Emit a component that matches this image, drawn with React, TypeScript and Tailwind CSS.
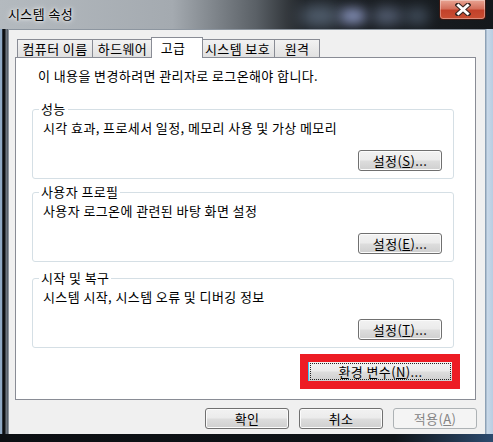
import React from 'react';

const face =
  'border border-[#707070] rounded-[3px] bg-[linear-gradient(#f2f2f2_0%,#ebebeb_48%,#dddddd_52%,#cfcfcf_100%)] shadow-[inset_0_0_0_1px_#fbfbfb] flex items-center justify-center text-[13px] leading-none text-black';

function Label({ label, mnemonic, after }: { label: string; mnemonic?: string; after?: string }) {
  return (
    <span>
      {label}
      {mnemonic ? (
        <>
          (<span className="underline">{mnemonic}</span>)
        </>
      ) : null}
      {after}
    </span>
  );
}

function Btn({ label, mnemonic, after = '', disabled = false }: { label: string; mnemonic?: string; after?: string; disabled?: boolean }) {
  if (disabled) {
    return (
      <div className="w-[84px] h-[21px] border border-[#adb2b5] rounded-[3px] bg-[#f4f4f4] flex items-center justify-center text-[13px] leading-none text-[#838383]">
        <Label label={label} mnemonic={mnemonic} after={after} />
      </div>
    );
  }
  return (
    <div className={`w-[84px] h-[21px] ${face}`}>
      <Label label={label} mnemonic={mnemonic} after={after} />
    </div>
  );
}

function Group({ title, desc, mnemonic, className = '' }: { title: string; desc: string; mnemonic: string; className?: string }) {
  return (
    <fieldset className={`w-[422px] border border-[#d5dfe5] rounded-[3px] pl-[6px] pr-[11px] pb-[7px] ${className}`}>
      <legend className="px-[2px] text-[13px] leading-[14px]">{title}</legend>
      <div className="pl-[4px] mt-[4px] text-[13px] leading-[16px]">{desc}</div>
      <div className="flex justify-end mt-[14px]">
        <Btn label="설정" mnemonic={mnemonic} after="..." />
      </div>
    </fieldset>
  );
}

function Tab({ label, w }: { label: string; w: string }) {
  return (
    <div className={`${w} h-[18px] -ml-px first:ml-0 border border-b-0 border-[#898c95] bg-[linear-gradient(#f2f2f2,#e1e1e1)] flex items-center justify-center text-[13px] leading-none`}>
      {label}
    </div>
  );
}

export default function App() {
  return (
    <div className="w-[493px] h-[442px] flex flex-col overflow-hidden bg-[linear-gradient(90deg,#0c0f13_0%,#0f1418_80%,#2c4a6e_100%)] font-['Noto_Sans_CJK_KR','Noto_Sans',sans-serif] tracking-[0.4px] text-black">
      {/* title bar */}
      <div className="relative h-[29px] flex items-start bg-[linear-gradient(90deg,#b4babf_0%,#a4aab0_35%,#5a6066_52%,#1c2024_62%,#14181c_100%)] overflow-hidden">
        <div className="absolute left-[300px] top-[6px] w-[40px] h-[20px] rounded-full bg-[#6d7f95] blur-[8px] opacity-70" />
        <div className="absolute left-[340px] top-[8px] w-[26px] h-[16px] rounded-full bg-[#9aa7d6] blur-[6px] opacity-80" />
        <div className="absolute left-[372px] top-[8px] w-[30px] h-[16px] rounded-full bg-[#8090b0] blur-[7px] opacity-60" />
        <div className="absolute left-[405px] top-[8px] w-[24px] h-[16px] rounded-full bg-[#7186a0] blur-[7px] opacity-50" />
        <div className="relative pl-[8px] pt-[7px] text-[13px] leading-[14px] text-black [text-shadow:0_0_6px_#ffffff,0_0_3px_#ffffff]">
          시스템 속성
        </div>
        <div className="relative ml-auto mr-[7px] w-[47px] h-[20px] rounded-b-[4px] border border-t-0 border-[#3b1812] bg-[linear-gradient(#e8a493_0%,#d4705c_45%,#c2412a_55%,#c94f33_100%)] shadow-[inset_0_0_0_1px_rgba(255,255,255,0.35)] flex items-center justify-center">
          <svg width="16" height="13" viewBox="0 0 16 13">
            <path d="M3 2 L13 11 M13 2 L3 11" stroke="#3a2622" strokeWidth="5" strokeLinecap="square" />
            <path d="M3.5 2.5 L12.5 10.5 M12.5 2.5 L3.5 10.5" stroke="#ffffff" strokeWidth="3" strokeLinecap="square" />
          </svg>
        </div>
      </div>

      <div className="flex h-[405px]">
        <div className="w-[8px] h-full bg-[linear-gradient(90deg,#8fa9c4_0%,#8fa9c4_20%,#0b0d10_35%,#0b0d10_55%,#6d7680_80%,#4e5660_100%)]" />
        {/* client area */}
        <div className="w-[477px] h-full bg-[#f0f0f0] border-l border-t border-[#8d96a0] flex flex-col pl-[6px] pt-[6px]">
          <div className="flex items-end h-[21px] pl-[2px]">
            <Tab label="컴퓨터 이름" w="w-[76px]" />
            <Tab label="하드웨어" w="w-[61px]" />
            <div className="relative z-10 w-[52px] h-[21px] -mx-[2px] -mb-px border border-b-0 border-[#898c95] bg-white flex items-start justify-center pt-[3px] text-[13px] leading-none">
              <span className="pr-[8px]">고급</span>
            </div>
            <Tab label="시스템 보호" w="w-[75px]" />
            <Tab label="원격" w="w-[46px]" />
          </div>
          {/* panel */}
          <div className="w-[461px] h-[343px] border border-[#898c95] bg-white flex flex-col pl-[16px] pt-[10px]">
            <div className="pl-[6px] text-[13px] leading-[16px]">이 내용을 변경하려면 관리자로 로그온해야 합니다.</div>
            <Group className="mt-[18px]" title="성능" desc="시각 효과, 프로세서 일정, 메모리 사용 및 가상 메모리" mnemonic="S" />
            <Group className="mt-[6px]" title="사용자 프로필" desc="사용자 로그온에 관련된 바탕 화면 설정" mnemonic="E" />
            <Group className="mt-[9px]" title="시작 및 복구" desc="시스템 시작, 시스템 오류 및 디버깅 정보" mnemonic="T" />
            <div className="flex justify-end pr-[15px] mt-[6px]">
              <div className="w-[160px] h-[35px] border-[8px] border-[#ed1c24]">
                <div className="relative h-full bg-[linear-gradient(#f2f2f2_0%,#ebebeb_48%,#dddddd_52%,#cfcfcf_100%)] border-l border-[#33c6f5] flex items-center justify-center text-[13px] leading-none">
                  <div className="absolute inset-[1px] border border-dotted border-[#222]" />
                  <span className="relative">
                    환경 변수(<span className="underline">N</span>)...
                  </span>
                </div>
              </div>
            </div>
          </div>
          <div className="flex justify-end gap-[10px] mt-[8px] pr-[8px]">
            <Btn label="확인" />
            <Btn label="취소" />
            <Btn label="적용" mnemonic="A" disabled />
          </div>
        </div>
        <div className="w-[8px] h-full bg-[linear-gradient(90deg,#7e93a8_0%,#c8d8e8_30%,#b9cde2_100%)]" />
      </div>
    </div>
  );
}
